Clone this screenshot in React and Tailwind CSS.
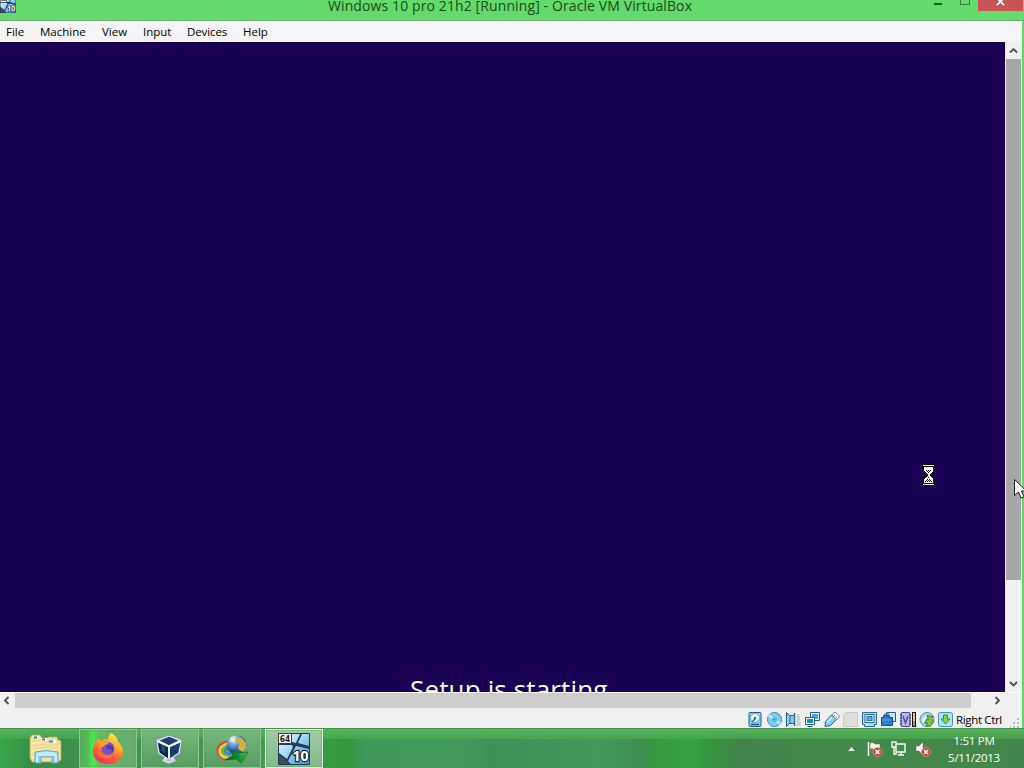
import React from "react";

const ui = "font-['Open_Sans','Noto_Sans',sans-serif]";

function Windows10Icon({ className }) {
  return (
    <svg viewBox="0 0 32 32" className={className}>
      <defs>
        <linearGradient id="pane" x1="0" y1="0" x2="1" y2="1">
          <stop offset="0" stopColor="#eefaff" />
          <stop offset="0.45" stopColor="#9fd9f8" />
          <stop offset="1" stopColor="#2f95dc" />
        </linearGradient>
      </defs>
      <rect width="32" height="32" rx="1" fill="#263a58" />
      <path d="M14 1h8l-4 9-4-1zM24 1h7v12l-11-3zM1 12h13l1 2-6 12-8-6zM18 13l13 3v15H13l-3-3z" fill="url(#pane)" />
      <path d="M1 22l8 6 2 3H1z" fill="#454c58" />
      <rect x="0.5" y="0.5" width="13" height="10" fill="#fff" stroke="#333e4c" />
      <text x="1.8" y="8.6" fontSize="8.5" fontWeight="700" textLength="10.5" lengthAdjust="spacingAndGlyphs" fontFamily="DejaVu Sans" fill="#222">64</text>
      <text x="14.5" y="27.500" fontSize="13.500" fontWeight="700" textLength="16" lengthAdjust="spacingAndGlyphs" fontFamily="Open Sans" fill="#fff" stroke="#16283f" strokeWidth="2.4" paintOrder="stroke">10</text>
    </svg>
  );
}

function ExplorerIcon() {
  return (
    <svg viewBox="0 0 34 30" className="h-[30px] w-[34px]">
      <path d="M1 4l2-3h8l2 3h5l2-1h8l1 3 3 1v19l-3 2H3l-2-4z" fill="#f2df95" stroke="#c3a95e" strokeWidth=".8" />
      <path d="M4 2h6v3H4zM12 4h6v3h-6zM20 6h7v3h-7z" fill="#fff" />
      <path d="M5 2.500h3v2H5z" fill="#348a48" />
      <path d="M13 4.500h3v2h-3z" fill="#c04a32" />
      <path d="M20 6.500h4v2h-4z" fill="#3487bd" />
      <path d="M2 8h16l2 2h11v15H3z" fill="#f7e6a4" />
      <path d="M3 11h27M4 14h26" stroke="#e7cf82" />
      <path d="M6 18q11-3 23 0v11h-6v-6H12v6H6z" fill="#91cfe9" stroke="#5ba8cf" />
      <path d="M7 19q10-3 21 0v3H7z" fill="#c3eafa" />
      <path d="M8 28v-6M27 22v6" stroke="#effcff" strokeWidth="1.500" />
    </svg>
  );
}

function FirefoxIcon() {
  return (
    <svg viewBox="0 0 32 32" className="size-8">
      <defs>
        <linearGradient id="fox" x1=".8" y1="0" x2=".3" y2="1">
          <stop offset="0" stopColor="#fff44f" />
          <stop offset=".35" stopColor="#ffb52c" />
          <stop offset=".65" stopColor="#ff6534" />
          <stop offset="1" stopColor="#ef2b62" />
        </linearGradient>
      </defs>
      <path d="M19 0c6 3 7 7 7 9 3 2 5 6 5 10 0 7-6 12-15 12S1 26 1 18c0-5 2-8 4-10V5l4 3c3-2 5-2 7-1 0-3 1-5 3-7z" fill="url(#fox)" />
      <circle cx="16" cy="15.500" r="6.500" fill="#7350d0" />
      <path d="M7 9c3-2 8-2 10 2l-4 1c-1 2-3 2-6 3z" fill="#ff9b27" />
      <path d="M8 15c0 7 8 10 13 5-2 8-15 7-16-1z" fill="#ff7139" />
      <path d="M15 12c6-1 8 5 5 8 1-5-3-4-6-4z" fill="#5238a8" />
    </svg>
  );
}

function VirtualBoxIcon() {
  return (
    <svg viewBox="0 0 30 32" className="mr-[3px] h-8 w-[28px]">
      <path d="M1 6L15 1l14 5-2 15-7 4 3 4-8 3-8-3 3-4-7-4z" fill="#dce8ef" stroke="#7b91a2" />
      <path d="M5 7l10-4 10 4-10 5z" fill="#203f68" />
      <path d="M3 9l11 5v12L5 20z" fill="#09264b" />
      <path d="M27 9l-11 5v12l9-6z" fill="#173f69" />
      <path d="M3 8l12 5 12-5M15 13v14" fill="none" stroke="#f4fbff" strokeWidth="1.800" />
      <path d="M9 28l6-2 6 2-6 2z" fill="#b6c9d4" />
      <path d="M6 11l5 2v8l-4-3z" fill="#244d72" />
    </svg>
  );
}

function DownloadManagerIcon() {
  return (
    <svg viewBox="0 0 34 30" className="h-[30px] w-[34px]">
      <defs>
        <radialGradient id="globe" cx=".35" cy=".25">
          <stop offset="0" stopColor="#f5fcff" />
          <stop offset=".4" stopColor="#82b4e6" />
          <stop offset="1" stopColor="#2a62a6" />
        </radialGradient>
        <linearGradient id="sail" x1="0" y1="0" x2="1" y2="0">
          <stop offset="0" stopColor="#0a5a1e" />
          <stop offset=".6" stopColor="#15902c" />
          <stop offset="1" stopColor="#38bd3c" />
        </linearGradient>
      </defs>
      <path d="M13 7.500C5 9 1 14 3 19c1.500 4 5 6 10 6" fill="none" stroke="#d8522b" strokeWidth="2.500" />
      <path d="M13 9.500C7 11 3.500 15 5 19c1 3 4 4.500 8 4.500" fill="none" stroke="#f9d33d" strokeWidth="2.500" />
      <path d="M14 11.500C9 13 6.500 15 7.500 18c1 3 4 3.500 7 3.500" fill="none" stroke="#69b758" strokeWidth="2" />
      <path d="M14 13.500C11 14 9 16 10 18c1 2 3 2 6 2" fill="none" stroke="#3d83c4" strokeWidth="2" />
      <circle cx="21.500" cy="11" r="10" fill="url(#globe)" />
      <path d="M22 3l5 1 4 5v5l-3 4-5-3 1-5-4-3z" fill="#d0b23f" />
      <path d="M16 3l5-1-3 4-4 2z" fill="#e3e8c7" />
      <path d="M16 16l8 3 9-1-7 11-5-4-11 1 8-4z" fill="url(#sail)" stroke="#075c1a" strokeWidth=".6" />
      <path d="M18 18l6 2 7-1-5 2z" fill="#48cd48" />
    </svg>
  );
}

const blue = { fill: "#86d1f3", stroke: "#245e91" };
const devices = [
  <g key="disk"><rect x="1" y=".5" width="12" height="14" rx="1" {...blue} /><circle cx="7" cy="6" r="4.500" fill="#f1fcff" stroke="#65a8d2" /><circle cx="7" cy="6" r="1.300" fill="#2b79ae" /><path d="M7 7l-3 3M3 12.500h8" fill="none" stroke="#17558b" strokeWidth="1.300" /></g>,
  <g key="optical"><circle cx="7.500" cy="7.500" r="7" fill="#79cff0" stroke="#3689bc" /><path d="M7 7L3 2 1 5zM8 8l4 5 2-3z" fill="#bcecfb" /><circle cx="7.500" cy="7.500" r="2" fill="#b9ecfb" stroke="#5aa9d0" /><circle cx="7.500" cy="7.500" r="1" fill="#235f8a" /></g>,
  <g key="audio"><path d="M.5.500l3 3h5v8h-5l-3 3z" {...blue} /><path d="M4 3.500v8" stroke="#245e91" /><path d="M8.500 1v13" stroke="#2b72a6" strokeWidth="1.500" /><path d="M11 3h2M10.500 5h3M11 7h3M10.500 9h3M11 11h4M10.500 13h4" stroke="#aaa" /></g>,
  <g key="network"><path d="M5.500.500h9v8h-9z" fill="#e4f5fc" stroke="#245e91" /><path d="M7 2h6v5H7z" fill="#49a7d7" /><path d="M.5 5.500h9v7h-9z" fill="#f2fbff" stroke="#245e91" /><path d="M2.500 14.500h5" stroke="#245e91" /><path d="M2 7h6v4H2z" fill="#1e8bc3" /></g>,
  <g key="usb"><path d="M1 14.500l.5-5 6-6.500 5 4.500-6 6z" {...blue} /><path d="M8 3l2-2.500h2l3 3v2L12.500 8z" fill="#f8f8f8" stroke="#777" /><path d="M10 3l1 1M12 5l1 1" stroke="#777" /><path d="M3 10l5-5" stroke="#cef3ff" strokeWidth="1.500" /></g>,
  <path key="shared" d="M.5 2.500l2-2h12v14H.5z" fill="#dfdfdd" stroke="#c9c9c6" />,
  <g key="display"><path d="M.5.500h14v12h-2v2h-10v-2h-2z" fill="#a9dff4" stroke="#286c95" /><rect x="3" y="2.500" width="9" height="8" fill="#eefaff" stroke="#236895" /><rect x="5" y="4.500" width="5" height="4" fill="#48b3dd" stroke="#28779f" /></g>,
  <g key="recording"><path d="M5.500.500h9v9h-9z" fill="#c5e9f8" stroke="#245e91" /><path d="M.500 5.500h2v-2h6v2h3v8H.500z" fill="#287ed0" stroke="#234d91" /><path d="M4 1v4M7 1v4" stroke="#294f91" /><path d="M2 8h7" stroke="#66b8eb" /></g>,
  <g key="processor"><rect x="1" y=".5" width="9" height="14" rx="1" fill="#b6b8e9" stroke="#4c4a91" /><path d="M0 3h2M0 6h2M0 9h2M0 12h2M9 3h2M9 6h2M9 9h2M9 12h2M3 4l2.500 7L8 4" fill="none" stroke="#484696" strokeWidth="1.300" /><path d="M12 0h4v15h-4z" fill="#111" /><path d="M13 1h2v13h-2z" fill="#f1ca66" /><path d="M13 9h2v5h-2z" fill="#79a84c" /></g>,
  <g key="mouse"><circle cx="8" cy="7.500" r="7" fill="#b2e1f2" stroke="#4c8eaa" /><path d="M2 8l5-6 3 1-4 6-2 4z" fill="#e0f7ff" stroke="#6db0ca" strokeWidth=".7" /><path d="M8 3.500l6 1-1.500 2 2 3.500-3 4H7l2-3-3 .5 1.500-4 2 .5z" fill="#80c63a" stroke="#438327" /></g>,
  <g key="keyboard"><rect x=".5" y=".5" width="14" height="14" rx="2" fill="#b3e4f4" stroke="#3c94bc" /><path d="M5.500 3h4v4H12l-4.500 5L3 7h2.500z" fill="#86d250" stroke="#3c8b34" /></g>,
];

function Arrow({ d, className = "" }) {
  return <svg viewBox="0 0 9 9" className={`size-[9px] ${className}`}><path d={d} fill="none" stroke="#505050" strokeWidth="1.900" /></svg>;
}

function TitleBar() {
  return (
    <header className="flex h-[21px] items-start overflow-hidden border-b border-[#66ae6c] bg-[#64d96c]">
      <div className="h-[13px] w-[328px] shrink-0 overflow-hidden"><Windows10Icon className="-mt-[3px] size-4" /></div>
      <h1 className="-mt-[4px] w-[364px] shrink-0 whitespace-nowrap text-[14px] leading-5 tracking-[0.108px] text-[#174d1a]">Windows 10 pro 21h2 [Running] - Oracle VM VirtualBox</h1>
      <div className="ml-auto flex w-[90px] shrink-0">
        <div className="mt-[3px] h-[2px] w-2 bg-[#17551e]" />
        <div className="ml-[18px] h-[5px] w-[10px] border border-t-0 border-[#347c39]" />
        <div className="ml-2 flex h-[11px] w-[45px] justify-center overflow-hidden bg-[#cb5355]">
          <svg viewBox="0 0 10 10" className="-mt-[3px] h-[9px] w-[9px]"><path d="M1 1l8 8M9 1L1 9" stroke="#fff" strokeWidth="2" /></svg>
        </div>
      </div>
    </header>
  );
}

function MenuBar() {
  return (
    <nav className="flex h-[21px] items-center border-t border-[#fafffa] bg-[#f5f5f7] text-[11.5px] leading-4 text-black">
      <span className="ml-[6px] w-[34px]">File</span>
      <span className="w-[62px]">Machine</span>
      <span className="w-[41px]">View</span>
      <span className="w-[44px]">Input</span>
      <span className="w-[56px] tracking-[-0.1px]">Devices</span>
      <span>Help</span>
    </nav>
  );
}

function TaskButton({ children, tone = "" }) {
  return <div className={`flex h-[39px] w-[58px] items-center justify-center border border-[#8bc894] outline outline-1 -outline-offset-2 outline-[#5c9f63]/40 ${tone}`}>{children}</div>;
}

function ErrorBadge({ x }) {
  return <g><circle cx={x} cy="11" r="4.500" fill="#d73e40" stroke="#eba2a0" strokeWidth=".6" /><path d={`M${x - 2} 9l4 4m0-4l-4 4`} stroke="#fff" strokeWidth="1.500" /></g>;
}

function Taskbar() {
  return (
    <footer className="relative flex h-10 border-t border-[#4d8f51] bg-[linear-gradient(to_right,#37a849_0,#399b49_15px,#36894a_35px,#40904d_75px,#449b52_260px,#359c3e_324px,#36963f_350px,#40985b_364px,#419a5c_465px,#3b9258_490px,#409a5a_600px,#3f8e54_639px,#36983f_655px,#37a242_690px,#36963e_708px,#42834a_740px,#438a4a_850px,#43864b_1024px)]">
      <div className="absolute inset-x-0 top-0 h-[10px] bg-gradient-to-b from-[#55b85a]/90 to-[#4dae51]/60" />
      <div className="relative flex items-center">
        <div className="flex w-[79px] justify-center pl-[13px]"><ExplorerIcon /></div>
        <div className="flex gap-1">
          <TaskButton tone="bg-[linear-gradient(to_right,#54ae5a_0,#54bb59_8px,#46e546_11px,#4be64b_14px,#65b968_18px,#67a96d_100%)]"><FirefoxIcon /></TaskButton>
          <TaskButton tone="bg-gradient-to-b from-[#76b97c] to-[#569b61]"><VirtualBoxIcon /></TaskButton>
          <TaskButton tone="bg-gradient-to-b from-[#76b97c] to-[#569b61]"><DownloadManagerIcon /></TaskButton>
          <TaskButton tone="border-[#e1f4e2] bg-gradient-to-b from-[#a1cca3] to-[#82b98a]"><Windows10Icon className="size-8" /></TaskButton>
        </div>
      </div>
      <div className="relative ml-auto flex items-center text-white">
        <svg viewBox="0 0 8 5" className="mr-[12px] mt-px h-[4px] w-[7px]"><path d="M0 5l4-5 4 5z" fill="#fff" /></svg>
        <svg viewBox="0 0 16 16" className="mr-[8px] mt-px size-4"><path d="M1.500 1v14" stroke="#fff" strokeWidth="1.500" /><path d="M3 2q3-1 5 1h5v6H8q-2-2-5-1z" fill="#f3fff4" stroke="#486c4b" strokeWidth=".5" /><ErrorBadge x={10.5} /></svg>
        <svg viewBox="0 0 16 16" className="mr-[8px] size-4" fill="none" stroke="#f5fff6" strokeWidth="1.400"><path d="M5 3h9v8H5zM7 14h6M10 11v3M1 1h4v5H1zM3 6v7h3" /></svg>
        <svg viewBox="0 0 16 16" className="mr-[17px] mt-px size-4"><path d="M1 5h3l4-4v13l-4-4H1z" fill="#fff" stroke="#476a4a" strokeWidth=".5" /><ErrorBadge x={11} /></svg>
        <div className="mr-[24px] flex w-[52px] flex-col items-center whitespace-nowrap text-[11.5px] leading-[17px] tracking-[-0.3px]"><span>1:51 PM</span><span>5/11/2013</span></div>
      </div>
    </footer>
  );
}

export default function App() {
  return (
    <main className={`relative flex h-[768px] w-[1024px] flex-col overflow-hidden ${ui}`}>
      <TitleBar />
      <div className="flex h-[707px] flex-col border-r-2 border-[#62d66a] bg-[#f0f0f0]">
        <MenuBar />
        <div className="flex h-[650px]">
          <section className="flex w-[1005px] flex-col justify-end overflow-hidden bg-[#190053] text-white">
            <p className="h-[18px] overflow-visible whitespace-nowrap pl-[410px] text-[26px] leading-[31px] tracking-[0.15px]">Setup is starting</p>
          </section>
          <aside className="ml-px flex w-[15px] flex-col items-center bg-[#f0f0f0]">
            <div className="flex h-[17px] items-center"><Arrow d="M1 6.500l3.500-3.500L8 6.500" /></div>
            <div className="h-[521px] w-[15px] bg-[#a6a6a6]" />
            <Arrow d="M1 3l3.500 3.500L8 3" className="mt-auto mb-[4px]" />
          </aside>
        </div>
        <div className="flex h-4 items-center border-t border-white bg-[#f0f0f0]">
          <div className="flex w-[15px] pl-[2px]"><Arrow d="M6.500 1L3 4.500 6.500 8" /></div>
          <div className="h-[15px] w-[956px] bg-[#cdcdcd]" />
          <Arrow d="M2.500 1L6 4.500 2.500 8" className="ml-[22px]" />
        </div>
        <div className="flex h-5 items-center justify-end bg-[#f0f0f0]">
          <div className="flex gap-[4px]">
            {devices.map((icon, i) => <svg key={i} viewBox="0 0 16 16" className="-mr-px mt-[3px] size-4">{icon}</svg>)}
          </div>
          <span className="ml-[3px] mt-[3px] w-[46px] whitespace-nowrap text-[11.5px] leading-4 tracking-[-0.35px]">Right Ctrl</span>
          <svg viewBox="0 0 10 10" className="ml-[8px] mr-[2px] mt-[9px] size-[10px]"><path d="M7 0h2v2H7zM7 4h2v2H7zM7 8h2v2H7zM3 4h2v2H3zM3 8h2v2H3zM0 8h1v2H0z" fill="#bbb" /></svg>
        </div>
      </div>
      <Taskbar />
      <svg viewBox="0 0 13 22" shapeRendering="crispEdges" className="absolute left-[922px] top-[464px] h-[22px] w-[13px]">
        <path d="M0 0h13v4h-1v3L8 11l4 4v3h1v4H0v-4h1v-3l4-4-4-4V4H0z" fill="#000" />
        <path d="M1 1h11v1H1zM1 20h11v1H1zM2 3h9v4L7.500 10.500v1L11 15v4H2v-4l3.500-3.500v-1L2 7z" fill="#fff" />
        <path d="M4 6h1v1H4zM6 6h1v1H6zM8 6h1v1H8zM5 7h1v1H5zM7 7h1v1H7zM6 8h1v1H6zM6 13h1v1H6zM5 15h1v1H5zM7 15h1v1H7zM4 16h1v1H4zM6 16h1v1H6zM8 16h1v1H8zM3 17h1v1H3zM5 17h1v1H5zM7 17h1v1H7zM9 17h1v1H9z" fill="#000" />
      </svg>
      <svg viewBox="0 0 13 20" className="absolute left-[1014px] top-[479px] h-5 w-[13px]"><path d="M.5.500v16l4-3.500 2.500 6 3-1-2.500-6h5z" fill="#fff" stroke="#222" /></svg>
    </main>
  );
}
